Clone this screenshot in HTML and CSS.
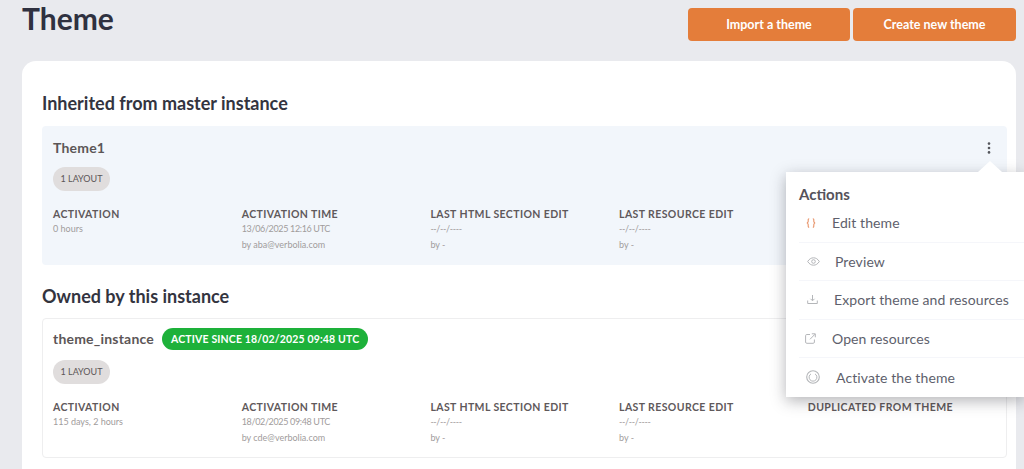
FILE: index.html
```html
<!DOCTYPE html>
<html lang="en">
<head>
<meta charset="utf-8">
<title>Theme</title>
<link rel="stylesheet" href="styles.css">
</head>
<body>
<div class="page">
  <header class="top">
    <h1 class="title">Theme</h1>
    <div class="top-actions">
      <button class="btn btn-import">Import a theme</button>
      <button class="btn btn-create">Create new theme</button>
    </div>
  </header>
  <main class="panel">
    <h2 class="section-title">Inherited from master instance</h2>
    <section class="theme theme-inherited">
      <div class="theme-head">
        <span class="theme-name">Theme1</span>
        <svg class="kebab" width="4" height="12" viewBox="0 0 4 12"><circle cx="2" cy="1.6" r="1.3"/><circle cx="2" cy="6" r="1.3"/><circle cx="2" cy="10.4" r="1.3"/></svg>
      </div>
      <span class="chip">1 LAYOUT</span>
      <div class="cols">
        <div class="col"><div class="label">ACTIVATION</div><div class="val">0 hours</div></div>
        <div class="col"><div class="label">ACTIVATION TIME</div><div class="val date">13/06/2025 12:16 UTC</div><div class="val">by aba@verbolia.com</div></div>
        <div class="col"><div class="label">LAST HTML SECTION EDIT</div><div class="val date">--/--/----</div><div class="val">by -</div></div>
        <div class="col"><div class="label">LAST RESOURCE EDIT</div><div class="val date">--/--/----</div><div class="val">by -</div></div>
      </div>
    </section>
    <h2 class="section-title section-owned">Owned by this instance</h2>
    <section class="theme theme-owned">
      <div class="theme-head theme-head-owned">
        <span class="theme-name">theme_instance</span>
        <span class="active">ACTIVE SINCE 18/02/2025 09:48 UTC</span>
      </div>
      <span class="chip">1 LAYOUT</span>
      <div class="cols">
        <div class="col"><div class="label">ACTIVATION</div><div class="val">115 days, 2 hours</div></div>
        <div class="col"><div class="label">ACTIVATION TIME</div><div class="val date">18/02/2025 09:48 UTC</div><div class="val">by cde@verbolia.com</div></div>
        <div class="col"><div class="label">LAST HTML SECTION EDIT</div><div class="val date">--/--/----</div><div class="val">by -</div></div>
        <div class="col"><div class="label">LAST RESOURCE EDIT</div><div class="val date">--/--/----</div><div class="val">by -</div></div>
        <div class="col"><div class="label">DUPLICATED FROM THEME</div></div>
      </div>
    </section>
  </main>
  <aside class="menu">
    <h3 class="menu-title">Actions</h3>
    <ul class="menu-list">
      <li class="menu-item item-edit">
        <svg class="ico" width="10" height="10" viewBox="0 0 10 10" fill="none" stroke="#e8946a" stroke-width="1.100"><path d="M3.200 .8C1.800 .8 2.300 2.200 2.200 3.400C2.100 4.400 1.700 4.800 .9 5C1.700 5.200 2.100 5.600 2.200 6.600C2.300 7.800 1.800 9.200 3.200 9.200"/><path d="M6.800 .8C8.200 .8 7.700 2.200 7.800 3.400C7.900 4.400 8.300 4.800 9.100 5C8.300 5.200 7.900 5.600 7.800 6.600C7.700 7.800 8.200 9.200 6.800 9.200"/></svg>
        <span>Edit theme</span>
      </li>
      <li class="menu-item item-preview">
        <svg class="ico" width="13" height="9" viewBox="0 0 13 9" fill="none" stroke="#b4b6b9" stroke-width="1"><path d="M.7 4.500C2.200 2 4.200.8 6.500.8S10.800 2 12.300 4.500C10.800 7 8.800 8.200 6.500 8.200S2.200 7 .7 4.500Z"/><circle cx="6.500" cy="4.500" r="1.800"/></svg>
        <span>Preview</span>
      </li>
      <li class="menu-item item-export">
        <svg class="ico" width="11" height="11" viewBox="0 0 11 11" fill="none" stroke="#b4b6b9" stroke-width="1"><path d="M5.500 1V6.500M3.500 4.800L5.500 6.800L7.500 4.800"/><path d="M.7 6.500V9.500H10.300V6.500"/></svg>
        <span>Export theme and resources</span>
      </li>
      <li class="menu-item item-open">
        <svg class="ico" width="11" height="11" viewBox="0 0 11 11" fill="none" stroke="#b4b6b9" stroke-width="1"><path d="M5 1.500H1.800Q.6 1.500.6 2.700V9Q.6 10.300 1.800 10.300H8.200Q9.400 10.300 9.400 9V6.500"/><path d="M5 6.300L10 1.200M6.800.8H10.300V4.300"/></svg>
        <span>Open resources</span>
      </li>
      <li class="menu-item item-activate">
        <svg class="ico" width="14" height="14" viewBox="0 0 14 14" fill="none" stroke="#b4b6b9"><circle cx="7" cy="7" r="6.300" stroke-width="1.100"/><path d="M5 3.900A3.900 3.900 0 1 0 9 3.900" stroke-width="1"/></svg>
        <span>Activate the theme</span>
      </li>
    </ul>
  </aside>
</div>
</body>
</html>
```
FILE: styles.css
```css
* { box-sizing: border-box; }
html, body { margin: 0; height: 100%; }
body {
  background: #e9eaee;
  font-family: "Lato", "Noto Sans", "Liberation Sans", sans-serif;
  color: #5c5657;
  overflow: hidden;
}
.page {
  position: relative;
  width: 1024px;
  height: 469px;
  overflow: hidden;
  padding: 0 8px 0 22px;
}
.top {
  display: flex;
  justify-content: space-between;
  align-items: flex-start;
  height: 61px;
  padding-top: 8px;
}
.title {
  margin: -8px 0 0;
  font-size: 30px;
  line-height: 36px;
  font-weight: 700;
  color: #2f3140;
}
.top-actions { display: flex; gap: 3px; }
.btn {
  height: 33px;
  border: 0;
  border-radius: 4px;
  background: #e47d3a;
  color: #fff;
  font-family: inherit;
  font-size: 12.500px;
  font-weight: 700;
  padding: 0 0 1px;
}
.btn-import { width: 162px; }
.btn-create { width: 163px; }
.panel {
  background: #fff;
  border-radius: 14px 14px 0 0;
  height: 408px;
  padding: 31px 9px 0 20px;
}
.section-title {
  margin: 0 0 12px;
  font-size: 18px;
  line-height: 22px;
  font-weight: 700;
  color: #33343f;
}
.section-owned { margin: 20px 0 11px; }
.theme {
  padding: 11px 11px 0;
  border-radius: 4px;
}
.theme-inherited { background: #f2f6fb; height: 139px; }
.theme-owned { background: #fff; border: 1px solid #eeeeef; height: 140px; padding: 9px 10px 0; }
.theme-head {
  display: flex;
  justify-content: space-between;
  align-items: center;
  height: 22px;
  margin-bottom: 8px;
  padding-right: 5px;
}
.theme-head-owned { justify-content: flex-start; gap: 8px; margin-bottom: 10px; }
.theme-name {
  font-size: 14px;
  line-height: 20px;
  font-weight: 700;
  letter-spacing: .2px;
  color: #5c5657;
}
.kebab { fill: #55565c; }
.chip {
  display: block;
  width: 57px;
  height: 24px;
  border-radius: 12px;
  background: #e0dddd;
  font-size: 9px;
  line-height: 24px;
  text-align: center;
  color: #5c5657;
}
.active {
  height: 22px;
  padding: 0 9px;
  border-radius: 11px;
  background: #1db13a;
  color: #fff;
  font-size: 10.500px;
  font-weight: 700;
  line-height: 22px;
  letter-spacing: .15px;
}
.cols {
  display: grid;
  grid-template-columns: repeat(5, 188.700px);
  margin-top: 17px;
}
.label {
  font-size: 10.500px;
  line-height: 13px;
  font-weight: 700;
  letter-spacing: .4px;
  color: #5f595b;
}
.val {
  font-size: 9px;
  line-height: 16px;
  color: #a19c9c;
}
.date { letter-spacing: -.35px; }
.menu {
  position: absolute;
  left: 786px;
  top: 172px;
  width: 238px;
  height: 225px;
  background: #fff;
  box-shadow: 0 4px 14px rgba(40, 40, 50, .35);
  padding: 12px 0 0 13px;
}
.menu::before {
  content: "";
  position: absolute;
  left: 192px;
  top: -11px;
  border-left: 12px solid transparent;
  border-right: 12px solid transparent;
  border-bottom: 11px solid #fff;
}
.menu-title {
  margin: 0;
  font-size: 15px;
  line-height: 20px;
  font-weight: 700;
  color: #55525a;
}
.menu-list { list-style: none; margin: 0; padding: 0; }
.menu-item {
  display: flex;
  align-items: center;
  height: 38.500px;
  font-size: 14px;
  letter-spacing: .1px;
  color: #5e5f6c;
  border-bottom: 1px solid #f5f6fa;
}
.menu-item:last-child { border-bottom: 0; }
.item-edit { padding-left: 7px; gap: 16px; }
.item-preview { padding-left: 8px; gap: 15px; }
.item-export { padding-left: 8px; gap: 16px; }
.item-open { padding-left: 6px; gap: 16px; }
.item-activate { padding-left: 7px; gap: 16px; }
```
